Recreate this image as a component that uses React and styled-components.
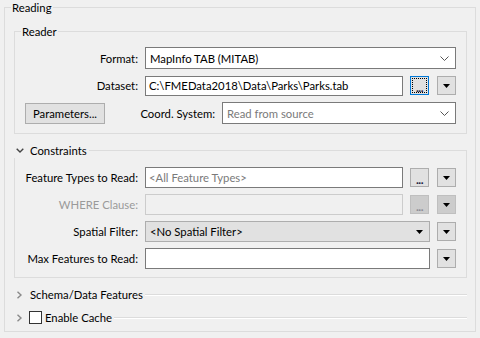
import React from 'react';
import styled, { createGlobalStyle, css } from 'styled-components';

const GlobalStyle = createGlobalStyle`
  html, body {
    margin: 0;
    background: #f0f0f0;
  }
  body {
    font-family: Lato, 'Noto Sans', sans-serif;
    font-size: 11.3px;
    color: #000;
  }
`;

const Page = styled.div`
  width: 480px;
  height: 338px;
  box-sizing: border-box;
  padding: 7px 4px 0 4px;
`;

const OuterBox = styled.section`
  position: relative;
  box-sizing: border-box;
  width: 472px;
  height: 325px;
  border: 1px solid #dcdcdc;
  padding: 23px 8px 0 9px;
  display: flex;
  flex-direction: column;
`;

const GroupBox = styled.section`
  position: relative;
  box-sizing: border-box;
  border: 1px solid #dcdcdc;
  margin-top: ${(p) => p.$top || 0}px;
  padding: ${(p) => p.$pad || '0'};
  display: flex;
  flex-direction: column;
  gap: 6px;
  ${(p) =>
    p.$collapsed &&
    css`
      height: 2px;
      border-left: 0;
      border-right: 0;
      border-bottom-color: #fff;
    `}
`;

const Legend = styled.div`
  position: absolute;
  top: -8px;
  left: ${(p) => p.$left}px;
  height: 15px;
  display: flex;
  align-items: center;
  padding: 0 ${(p) => p.$padRight || 1}px 0 ${(p) => p.$padLeft || 1}px;
  background: #f0f0f0;
  white-space: nowrap;
  line-height: 15px;
`;

const LegendText = styled.span`
  margin-left: ${(p) => p.$gap || 0}px;
`;

const Row = styled.div`
  display: flex;
  align-items: center;
  height: ${(p) => p.$h || 21}px;
`;

const Label = styled.span`
  flex: ${(p) => (p.$w ? `0 0 ${p.$w}px` : '1 1 auto')};
  min-width: 0;
  margin-right: ${(p) => p.$gap}px;
  text-align: right;
  white-space: nowrap;
  color: ${(p) => (p.$disabled ? '#9a9a9a' : '#000')};
`;

const Field = styled.div`
  position: relative;
  box-sizing: border-box;
  flex: ${(p) => (p.$w ? `0 0 ${p.$w}px` : '1 1 auto')};
  min-width: 0;
  height: ${(p) => p.$h || 21}px;
  display: flex;
  align-items: center;
  padding: 0 6px 0 ${(p) => p.$padLeft || 3}px;
  border: 1px solid ${(p) => (p.$disabled ? '#cccccc' : p.$button ? '#adadad' : '#7a7a7a')};
  background: ${(p) => (p.$disabled ? '#f0f0f0' : p.$button ? '#e1e1e1' : '#fff')};
  color: ${(p) => (p.$muted ? '#7a7a7a' : '#000')};
  white-space: nowrap;
  overflow: hidden;
`;

const FieldText = styled.span`
  flex: 1 1 auto;
`;

const SmallButton = styled.button`
  position: relative;
  box-sizing: border-box;
  flex: 0 0 19px;
  width: 19px;
  height: 19px;
  margin-left: ${(p) => p.$gap || 7}px;
  padding: 0;
  display: flex;
  align-items: center;
  justify-content: center;
  font: inherit;
  font-size: 12px;
  font-weight: bold;
  line-height: 1;
  border: 1px solid ${(p) => (p.$focus ? '#0078d7' : p.$disabled ? '#bfbfbf' : '#adadad')};
  background: ${(p) => (p.$disabled ? '#cccccc' : '#e1e1e1')};
  color: ${(p) => (p.$disabled ? '#8d8d96' : '#1a1a40')};
  ${(p) =>
    p.$focus &&
    css`
      &::after {
        content: '';
        position: absolute;
        inset: 1px;
        border: 1px dotted #000;
      }
    `}
`;

const Dots = styled.span`
  display: block;
  margin-top: 4px;
  letter-spacing: -0.5px;
`;

const PushButton = styled.button`
  box-sizing: border-box;
  flex: 0 0 80px;
  width: 80px;
  height: 21px;
  padding: 0;
  font: inherit;
  color: #000;
  border: 1px solid #adadad;
  background: #e1e1e1;
`;

const Check = styled.span`
  box-sizing: border-box;
  width: 13px;
  height: 13px;
  margin-left: 5px;
  border: 1px solid #333;
  background: #fff;
`;

const ComboChevron = () => (
  <svg width="9" height="5" viewBox="0 0 9 5">
    <polyline points="0.5,0.5 4.5,4.5 8.5,0.5" fill="none" stroke="#555" strokeWidth="1" />
  </svg>
);

const Triangle = () => (
  <svg width="7" height="4" viewBox="0 0 7 4">
    <polygon points="0,0 7,0 3.5,4" fill="#000" />
  </svg>
);

const DownChevron = () => (
  <svg width="8" height="5" viewBox="0 0 8 5">
    <polyline points="0.7,0.7 4,4 7.3,0.7" fill="none" stroke="#444" strokeWidth="1.4" />
  </svg>
);

const RightChevron = () => (
  <svg width="8" height="8" viewBox="0 0 8 8">
    <polyline points="1.5,0.7 5,4 1.5,7.3" fill="none" stroke="#8a8a8a" strokeWidth="1.4" />
  </svg>
);

function DropButton({ disabled, gap }) {
  return (
    <SmallButton $disabled={disabled} $gap={gap}>
      <Triangle />
    </SmallButton>
  );
}

function BrowseButton({ disabled, focus }) {
  return (
    <SmallButton $disabled={disabled} $focus={focus}>
      <Dots>...</Dots>
    </SmallButton>
  );
}

export default function App() {
  return (
    <>
      <GlobalStyle />
      <Page>
        <OuterBox>
          <Legend $left={6}>Reading</Legend>

          <GroupBox $pad="15px 10px 9px 10px">
            <Legend $left={6}>Reader</Legend>
            <Row $h={22}>
              <Label $w={113} $gap={7}>Format:</Label>
              <Field $h={22} $padLeft={4}>
                <FieldText>MapInfo TAB (MITAB)</FieldText>
                <ComboChevron />
              </Field>
            </Row>
            <Row>
              <Label $w={113} $gap={7}>Dataset:</Label>
              <Field $h={20}>
                <FieldText>C:\FMEData2018\Data\Parks\Parks.tab</FieldText>
              </Field>
              <BrowseButton focus />
              <DropButton gap={8} />
            </Row>
            <Row $h={22}>
              <PushButton>Parameters...</PushButton>
              <Label $gap={7}>Coord. System:</Label>
              <Field $w={234} $h={22} $padLeft={4} $muted>
                <FieldText>Read from source</FieldText>
                <ComboChevron />
              </Field>
            </Row>
          </GroupBox>

          <GroupBox $top={16} $pad="16px 10px 8px 8px">
            <Legend $left={-2} $padLeft={3} $padRight={2}>
              <DownChevron />
              <LegendText $gap={6}>Constraints</LegendText>
            </Legend>
            <Row>
              <Label $w={115} $gap={7}>Feature Types to Read:</Label>
              <Field $muted>
                <FieldText>&lt;All Feature Types&gt;</FieldText>
              </Field>
              <BrowseButton />
              <DropButton gap={8} />
            </Row>
            <Row>
              <Label $w={115} $gap={7} $disabled>WHERE Clause:</Label>
              <Field $disabled />
              <BrowseButton disabled />
              <DropButton disabled gap={8} />
            </Row>
            <Row>
              <Label $w={115} $gap={7}>Spatial Filter:</Label>
              <Field $button $padLeft={4}>
                <FieldText>&lt;No Spatial Filter&gt;</FieldText>
                <Triangle />
              </Field>
              <DropButton />
            </Row>
            <Row>
              <Label $w={115} $gap={7}>Max Features to Read:</Label>
              <Field />
              <DropButton />
            </Row>
          </GroupBox>

          <GroupBox $top={16} $collapsed>
            <Legend $left={-1} $padLeft={3} $padRight={2}>
              <RightChevron />
              <LegendText $gap={6}>Schema/Data Features</LegendText>
            </Legend>
          </GroupBox>

          <GroupBox $top={21} $collapsed>
            <Legend $left={-1} $padLeft={3} $padRight={2}>
              <RightChevron />
              <Check />
              <LegendText $gap={3}>Enable Cache</LegendText>
            </Legend>
          </GroupBox>
        </OuterBox>
      </Page>
    </>
  );
}
